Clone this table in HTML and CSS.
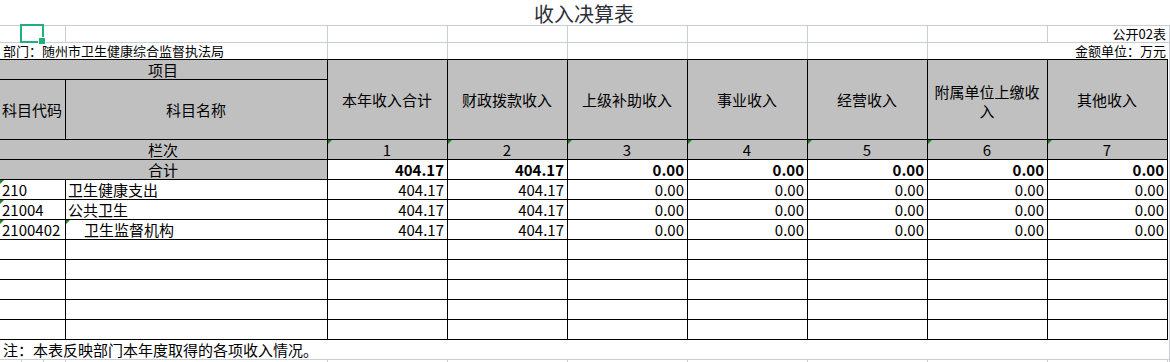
FILE: index.html
```html
<!DOCTYPE html>
<html lang="zh-CN">
<head>
<meta charset="utf-8">
<title>收入决算表</title>
<link rel="stylesheet" href="styles.css">
</head>
<body>
<div class="page">
  <div class="title">收入决算表</div>
  <div class="sheet">
    <div class="grid-row">
      <div class="gc"></div>
      <div class="gc"></div>
      <div class="gc"></div>
      <div class="gc"></div>
      <div class="gc"></div>
      <div class="gc"></div>
      <div class="gc"></div>
      <div class="gc"></div>
      <div class="gc last">公开02表</div>
    </div>
    <div class="grid-row">
      <div class="gc span2 left">部门：随州市卫生健康综合监督执法局</div>
      <div class="gc"></div>
      <div class="gc"></div>
      <div class="gc"></div>
      <div class="gc"></div>
      <div class="gc"></div>
      <div class="gc last span2">金额单位：万元</div>
    </div>

    <table class="report">
      <colgroup>
        <col class="col-code">
        <col class="col-name">
        <col class="col-num"><col class="col-num"><col class="col-num"><col class="col-num"><col class="col-num"><col class="col-num"><col class="col-num">
      </colgroup>
      <tbody>
        <tr class="r20">
          <td class="hd c" colspan="2">项目</td>
          <td class="hd c" rowspan="2">本年收入合计</td>
          <td class="hd c" rowspan="2">财政拨款收入</td>
          <td class="hd c" rowspan="2">上级补助收入</td>
          <td class="hd c" rowspan="2">事业收入</td>
          <td class="hd c" rowspan="2">经营收入</td>
          <td class="hd c wrap" rowspan="2">附属单位上缴收入</td>
          <td class="hd c" rowspan="2">其他收入</td>
        </tr>
        <tr class="r60">
          <td class="hd c">科目代码</td>
          <td class="hd c">科目名称</td>
        </tr>
        <tr class="r20">
          <td class="hd c" colspan="2">栏次</td>
          <td class="hd c tri">1</td>
          <td class="hd c tri">2</td>
          <td class="hd c tri">3</td>
          <td class="hd c tri">4</td>
          <td class="hd c tri">5</td>
          <td class="hd c tri">6</td>
          <td class="hd c tri">7</td>
        </tr>
        <tr class="r20">
          <td class="hd c" colspan="2">合计</td>
          <td class="num b">404.17</td>
          <td class="num b">404.17</td>
          <td class="num b">0.00</td>
          <td class="num b">0.00</td>
          <td class="num b">0.00</td>
          <td class="num b">0.00</td>
          <td class="num b">0.00</td>
        </tr>
        <tr class="r20">
          <td class="tri">210</td>
          <td>卫生健康支出</td>
          <td class="num">404.17</td>
          <td class="num">404.17</td>
          <td class="num">0.00</td>
          <td class="num">0.00</td>
          <td class="num">0.00</td>
          <td class="num">0.00</td>
          <td class="num">0.00</td>
        </tr>
        <tr class="r20">
          <td class="tri">21004</td>
          <td>公共卫生</td>
          <td class="num">404.17</td>
          <td class="num">404.17</td>
          <td class="num">0.00</td>
          <td class="num">0.00</td>
          <td class="num">0.00</td>
          <td class="num">0.00</td>
          <td class="num">0.00</td>
        </tr>
        <tr class="r20">
          <td class="tri">2100402</td>
          <td class="tri indent">卫生监督机构</td>
          <td class="num">404.17</td>
          <td class="num">404.17</td>
          <td class="num">0.00</td>
          <td class="num">0.00</td>
          <td class="num">0.00</td>
          <td class="num">0.00</td>
          <td class="num">0.00</td>
        </tr>
        <tr class="r20"><td></td><td></td><td></td><td></td><td></td><td></td><td></td><td></td><td></td></tr>
        <tr class="r20"><td></td><td></td><td></td><td></td><td></td><td></td><td></td><td></td><td></td></tr>
        <tr class="r20"><td></td><td></td><td></td><td></td><td></td><td></td><td></td><td></td><td></td></tr>
        <tr class="r20"><td></td><td></td><td></td><td></td><td></td><td></td><td></td><td></td><td></td></tr>
        <tr class="r20"><td></td><td></td><td></td><td></td><td></td><td></td><td></td><td></td><td></td></tr>
      </tbody>
    </table>

    <div class="note">注：本表反映部门本年度取得的各项收入情况。</div>

    <div class="tail-row">
      <div class="tc"></div><div class="tc"></div><div class="tc"></div><div class="tc"></div>
      <div class="tc"></div><div class="tc"></div><div class="tc"></div><div class="tc"></div>
      <div class="tc"></div><div class="tc"></div><div class="tc"></div>
      <div class="tc last"></div>
    </div>
  </div>

  <div class="selection"></div>
</div>
</body>
</html>
```

FILE: styles.css
```css
* {
  box-sizing: border-box;
}

body {
  margin: 0;
  background: #ffffff;
  color: #000000;
  font-family: "Noto Sans CJK SC", "Noto Sans", sans-serif;
}

.page {
  position: relative;
  width: 1170px;
}

.title {
  width: 1168px;
  height: 25px;
  padding-top: 2px;
  font-size: 20px;
  line-height: 23px;
  text-align: center;
  color: #2e3038;
}

.sheet {
  width: 1170px;
  border-right: 1px solid #c8cdd8;
}

/* light spreadsheet gridline rows above the table */
.grid-row {
  display: grid;
  grid-template-columns: 66px 262px repeat(6, 120px) 1fr;
  height: 17px;
  border-top: 1px solid #c8cdd8;
  font-size: 13px;
  line-height: 16px;
}

.gc {
  border-right: 1px solid #c8cdd8;
  padding: 0 3px;
  white-space: nowrap;
}

.gc.span2 {
  grid-column: span 2;
}

.gc.left {
  padding-left: 3px;
}

.gc.last {
  border-right: none;
  text-align: right;
}

/* main report table */
.report {
  width: 1168px;
  table-layout: fixed;
  border-collapse: separate;
  border-spacing: 0;
  border-top: 1px solid #000000;
  font-size: 15px;
}

.col-code {
  width: 66px;
}

.col-name {
  width: 262px;
}

.col-num {
  width: 120px;
}

.r20 {
  height: 20px;
}

.r60 {
  height: 60px;
}

.report td {
  border-right: 1px solid #000000;
  border-bottom: 1px solid #000000;
  padding: 0 3px 0 2px;
  line-height: 18px;
  white-space: nowrap;
  vertical-align: middle;
}

.report td.hd {
  background: #c0c0c0;
}

.report td.c {
  text-align: center;
}

.report td.wrap {
  white-space: normal;
  line-height: 19px;
  padding-top: 2px;
}

.report td.num {
  text-align: right;
  padding-right: 3px;
}

.report td.b {
  font-weight: bold;
}

.report td.indent {
  padding-left: 18px;
}

.tri {
  position: relative;
}

.tri::before {
  content: "";
  position: absolute;
  left: 0;
  top: 0;
  border-top: 4px solid #1b8a1b;
  border-right: 4px solid transparent;
}

.note {
  height: 20px;
  border-bottom: 1px solid #c8cdd8;
  padding-left: 3px;
  font-size: 15px;
  line-height: 19px;
  white-space: nowrap;
}

.tail-row {
  display: grid;
  grid-template-columns: 22px 22px 22px 262px repeat(7, 120px) 1fr;
  height: 2px;
}

.tc {
  border-right: 1px solid #c8cdd8;
}

.tc.last {
  border-right: none;
}

/* active-cell selection overlay */
.selection {
  position: absolute;
  left: 20px;
  top: 24px;
  width: 24px;
  height: 19px;
  border: 2px solid #21b07c;
}

.selection::after {
  content: "";
  position: absolute;
  right: -4px;
  bottom: -4px;
  width: 6px;
  height: 6px;
  background: #21b07c;
  border: 1px solid #ffffff;
}
```
